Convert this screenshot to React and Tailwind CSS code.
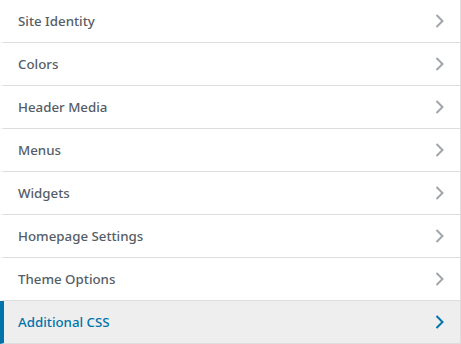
const items = [
  "Site Identity",
  "Colors",
  "Header Media",
  "Menus",
  "Widgets",
  "Homepage Settings",
  "Theme Options",
  "Additional CSS",
];

function Chevron({ active }) {
  return (
    <svg width="20" height="20" viewBox="0 0 20 20" className={active ? "text-[#0073aa]" : "text-[#a0a5aa]"}>
      <path d="M6.5 4 L12.5 10 L6.5 16" fill="none" stroke="currentColor" strokeWidth="2" />
    </svg>
  );
}

export default function App() {
  return (
    <div className="w-[461px] h-[344px] bg-white" style={{ fontFamily: '"Noto Sans", sans-serif' }}>
      {items.map((t, i) => {
        const active = i === items.length - 1;
        return (
          <div
            key={t}
            className={
              "flex items-center justify-between h-[43px] border-l-4 border-r border-b border-r-[#dddddd] border-b-[#dddddd] pl-[14px] pr-[10px] text-[13.3px] font-medium " +
              (active
                ? "border-l-[#0073aa] bg-[#eeeeee] text-[#0073aa]"
                : "border-l-white bg-white text-[#555d66]")
            }
          >
            <span className="leading-[21px]">{t}</span>
            <Chevron active={active} />
          </div>
        );
      })}
    </div>
  );
}
